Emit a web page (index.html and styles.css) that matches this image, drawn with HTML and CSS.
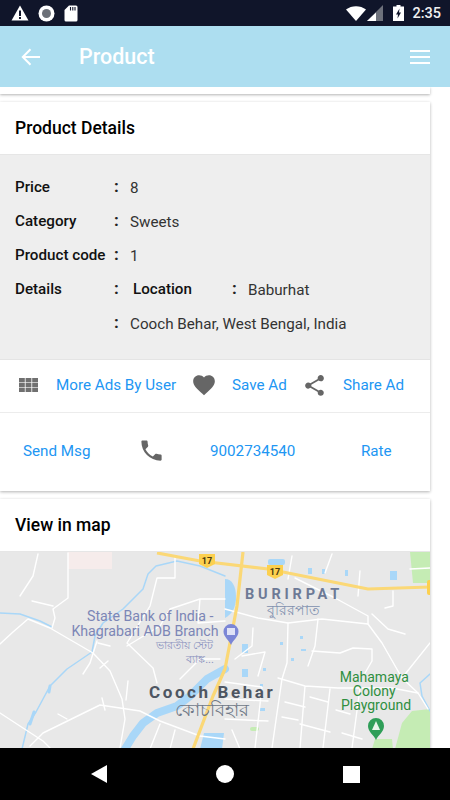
FILE: index.html
```html
<!DOCTYPE html>
<html lang="en">
<head>
    <meta charset="UTF-8">
    <meta name="viewport" content="width=device-width, initial-scale=1.0">
    <title>Product</title>
    <link rel="stylesheet" href="styles.css">
</head>
<body>
<div class="phone">

    <!-- Android status bar -->
    <div class="status-bar">
        <div class="status-left">
            <svg width="18" height="16" viewBox="0 0 18 16"><path d="M9 0.5L17.5 15.5H0.5z" fill="#fff"/><rect x="8" y="5.5" width="2" height="5.5" fill="#10152a"/><rect x="8" y="12" width="2" height="2" fill="#10152a"/></svg>
            <svg width="17" height="17" viewBox="0 0 17 17"><circle cx="8.5" cy="8.5" r="8" fill="#fff"/><circle cx="8.5" cy="8.5" r="4.5" fill="#6c7078"/></svg>
            <svg width="14" height="17" viewBox="0 0 14 17"><path d="M5 0.5H12a1.5 1.5 0 0 1 1.5 1.5V15a1.5 1.5 0 0 1-1.5 1.5H2A1.5 1.5 0 0 1 0.5 15V5z" fill="#fff"/><path d="M6.5 2v3.5M8.8 2v3.5M11 2v3.5" stroke="#10152a" stroke-width="1.1"/></svg>
        </div>
        <div class="status-right">
            <svg width="20" height="15" viewBox="0 0 20 15"><path d="M0 3.5C5.5-1 14.5-1 20 3.5L10 15z" fill="#fff"/></svg>
            <svg class="signal" width="16" height="16" viewBox="0 0 16 16"><path d="M16 0V16H0z" fill="#6d717b"/><path d="M9 7.5V16H0z" fill="#fff"/></svg>
            <svg class="battery" width="11" height="16" viewBox="0 0 11 16"><path d="M3.5 0H7.5V1.5H11V16H0V1.5H3.5z" fill="#fff"/><path d="M6.5 3.5L3 9.5H5L4.5 13.5L8 7.5H6z" fill="#10152a"/></svg>
            <span class="clock">2:35</span>
        </div>
    </div>

    <!-- App bar -->
    <header class="app-bar">
        <svg class="back-icon" width="20" height="18" viewBox="0 0 20 18"><path d="M19 9H2M9.5 1.2L1.8 9l7.7 7.8" fill="none" stroke="#fff" stroke-width="2"/></svg>
        <span class="app-title">Product</span>
        <div class="menu-icon"><span></span><span></span><span></span></div>
    </header>

    <main class="content">
        <div class="card card-stub"></div>

        <!-- Product details -->
        <section class="card">
            <h2 class="card-title">Product Details</h2>
            <div class="details">
                <span class="label">Price</span><span class="colon">:</span><span class="value">8</span>
                <span class="label">Category</span><span class="colon">:</span><span class="value">Sweets</span>
                <span class="label">Product code</span><span class="colon">:</span><span class="value">1</span>
                <span class="label">Details</span><span class="colon">:</span>
                <div class="sub-row">
                    <span class="label sub-label">Location</span><span class="colon">:</span><span class="value">Baburhat</span>
                </div>
                <span></span><span class="colon">:</span><span class="value">Cooch Behar, West Bengal, India</span>
            </div>
            <div class="actions actions-top">
                <svg class="icon-grid" width="19" height="14" viewBox="0 0 19 14" fill="#707070"><rect width="5.8" height="4.3"/><rect x="6.6" width="5.8" height="4.3"/><rect x="13.2" width="5.8" height="4.3"/><rect y="4.85" width="5.8" height="4.3"/><rect x="6.6" y="4.85" width="5.8" height="4.3"/><rect x="13.2" y="4.85" width="5.8" height="4.3"/><rect y="9.7" width="5.8" height="4.3"/><rect x="6.6" y="9.7" width="5.8" height="4.3"/><rect x="13.2" y="9.7" width="5.8" height="4.3"/></svg>
                <a class="link">More Ads By User</a>
                <svg width="26" height="26" viewBox="0 0 24 24" fill="#666"><path d="M12 21.35l-1.45-1.32C5.4 15.36 2 12.28 2 8.5 2 5.42 4.42 3 7.5 3c1.74 0 3.41.81 4.5 2.09C13.09 3.81 14.76 3 16.5 3 19.58 3 22 5.42 22 8.5c0 3.78-3.4 6.86-8.55 11.54L12 21.35z"/></svg>
                <a class="link">Save Ad</a>
                <svg width="25" height="25" viewBox="0 0 24 24" fill="#666"><path d="M18 16.08c-.76 0-1.44.3-1.96.77L8.91 12.7c.05-.23.09-.46.09-.7s-.04-.47-.09-.7l7.05-4.11c.54.5 1.25.81 2.04.81 1.66 0 3-1.34 3-3s-1.34-3-3-3-3 1.34-3 3c0 .24.04.47.09.7L8.04 9.81C7.5 9.31 6.79 9 6 9c-1.66 0-3 1.34-3 3s1.34 3 3 3c.79 0 1.5-.31 2.04-.81l7.12 4.16c-.05.21-.08.43-.08.65 0 1.61 1.31 2.92 2.92 2.92 1.61 0 2.92-1.31 2.92-2.92s-1.31-2.92-2.92-2.92z"/></svg>
                <a class="link">Share Ad</a>
            </div>
            <div class="actions actions-bottom">
                <a class="link">Send Msg</a>
                <svg width="27" height="27" viewBox="0 0 24 24" fill="#666"><path d="M6.62 10.79c1.44 2.83 3.76 5.14 6.59 6.59l2.2-2.2c.27-.27.67-.36 1.02-.24 1.12.37 2.33.57 3.57.57.55 0 1 .45 1 1V20c0 .55-.45 1-1 1-9.39 0-17-7.61-17-17 0-.55.45-1 1-1h3.5c.55 0 1 .45 1 1 0 1.25.2 2.45.57 3.57.11.35.03.74-.25 1.02l-2.2 2.2z"/></svg>
                <a class="link">9002734540</a>
                <a class="link">Rate</a>
            </div>
        </section>

        <!-- Map -->
        <section class="card">
            <h2 class="card-title">View in map</h2>
            <svg class="map" width="430" height="197" viewBox="0 0 430 197">
                <rect width="430" height="197" fill="#e8e8e8"/>
                <rect x="68" y="0" width="44" height="17" fill="#f6eceb"/>
                <path d="M410 0H430V31H413z" fill="#c5ecb4"/>
                <path d="M395 197L402 171 412 159 430 157V197z" fill="#c5ecb4"/>
                <path d="M372 197L375 187H392L393 197z" fill="#c5ecb4"/>
                <rect x="250" y="175" width="9" height="4" rx="2" fill="#c5ecb4"/>

                <!-- water -->
                <g fill="none" stroke="#a9d7f8" stroke-linejoin="round" stroke-linecap="round">
                    <path stroke-width="1.5" d="M225 24L200 14 177 9 156 14 148 22 143 37 123 57 103 71 95 84 92 100 67 117 50 134 36 160 28 172 22 197"/>
                    <path stroke-width="1.5" d="M0 61L20 62 40 69 52 75"/>
                    <path stroke-width="1.5" d="M430 122L420 131 422 144 430 159"/>
                    <path stroke-width="8" d="M225 117L207 127 190 144 177 154 157 161 143 171 133 184 125 197"/>
                    <path stroke-width="3" d="M50 134L49 140M34 160L30 172"/>
                </g>
                <g fill="#a9d7f8">
                    <path d="M225 27C232 27 236 34 236 45 236 56 232 62 225 66z"/>
                    <path d="M204 181H224L222 197H200z"/>
                    <rect x="268" y="7" width="17" height="6" rx="2"/>
                    <rect x="308" y="16" width="4" height="6"/><rect x="322" y="17" width="3" height="5"/><rect x="345" y="18" width="3" height="6"/>
                    <rect x="390" y="19" width="7" height="9"/>
                    <rect x="242" y="92" width="6" height="9"/><rect x="242" y="117" width="6" height="8"/>
                    <rect x="300" y="84" width="3" height="3"/><rect x="280" y="90" width="3" height="3"/>
                    <rect x="301" y="97" width="5" height="2"/><rect x="291" y="106" width="3" height="3"/>
                    <rect x="263" y="116" width="3" height="3"/><rect x="260" y="132" width="3" height="3"/><rect x="260" y="156" width="5" height="3"/>
                </g>

                <!-- roads -->
                <g fill="none" stroke="#fff" stroke-width="1.4" stroke-linejoin="round" stroke-linecap="round">
                    <path d="M0 92L13 80 28 67 50 76 93 101 110 119 122 147 125 167 120 196"/>
                    <path d="M68 1V46L53 57 55 66 52 76M32 49L53 54"/>
                    <path d="M38 2L33 24 20 44M97 89L90 111 83 122M98 91L110 94M100 116L108 109"/>
                    <path d="M30 194L43 181 100 153 140 159 160 169 200 184 225 187"/>
                    <path d="M0 161L23 176 43 189 50 196M58 162L67 167M128 129L126 148M102 146L105 158"/>
                    <path d="M175 4V26H157L150 54 127 91 153 116 157 131"/>
                    <path d="M127 94L160 74 170 57 200 47H225M200 47L198 71 225 69M180 127L200 107H220"/>
                    <path d="M225 57L258 66 288 71 322 67 368 72 382 91 402 126 418 141 428 157"/>
                    <path d="M295 26L335 46 368 64V72M372 62L388 77 405 82M402 126L430 91"/>
                    <path d="M288 71L287 111 282 127 277 161 272 196M318 67L315 94 308 114"/>
                    <path d="M312 99L340 101 353 96 372 97V109L365 121"/>
                    <path d="M278 126L305 134 338 136H392L418 141M305 134L300 196M330 137L323 196M360 136L352 196"/>
                    <path d="M225 147L268 149M225 167L268 169M225 130L262 135 255 196M253 76L252 94 235 107M242 104L265 100 258 124"/>
                    <path d="M292 4L288 27M332 2L325 21M360 19L358 44M410 17L430 16M393 39V54L385 56M342 181L362 187M300 172L330 180"/>
                    <path d="M160 172L150 197M175 178L170 197M232 178L240 197M285 150L305 155M310 145L328 150M282 165L298 168M336 158L350 162"/>
                </g>
                <g fill="none" stroke="#fbd876" stroke-linejoin="round">
                    <path stroke-width="3.2" d="M157 1L200 9 268 17 368 37 430 35"/>
                    <path stroke-width="3.2" d="M243 0L237 54 225 117 213 144 193 197"/>
                </g>

                <!-- shields -->
                <g class="shield">
                    <path d="M199 2H215V12L207 16 199 12z" fill="#fcd04f"/>
                    <text x="207" y="12">17</text>
                    <path d="M267 13H283V23L275 27 267 23z" fill="#fcd04f"/>
                    <text x="275" y="23">17</text>
                    <rect x="427" y="28" width="8" height="15" rx="2" fill="#fcd04f"/>
                </g>

                <!-- pins -->
                <path d="M231 72a7.5 7.5 0 0 1 7.5 7.5C238.5 85 233 88 231 93 229 88 223.5 85 223.5 79.5A7.5 7.5 0 0 1 231 72z" fill="#7b86d6"/>
                <rect x="227" y="76" width="8" height="7" fill="#dfe2f6"/>
                <path d="M376 166a8 8 0 0 1 8 8C384 180 378 183 376 188 374 183 368 180 368 174A8 8 0 0 1 376 166z" fill="#2f9e58"/>
                <path d="M376 169L380 178H372z" fill="#e8f5ea"/>

                <!-- labels -->
                <text class="map-label poi">
                    <tspan x="152" y="69">State Bank of India -</tspan>
                    <tspan x="145" y="84">Khagrabari ADB Branch</tspan>
                </text>
                <text class="map-label poi-bn">
                    <tspan x="186" y="97">ভারতীয় স্টেট</tspan>
                    <tspan x="200" y="111">ব্যাঙ্ক...</tspan>
                </text>
                <text class="map-place" x="149" y="146">Cooch Behar</text>
                <text class="map-area" x="245" y="47">BURIRPAT</text>
                <text class="map-label place-bn" x="212" y="164">কোচবিহার</text>
                <text class="map-label area-bn" x="293" y="63">বুরিরপাত</text>
                <text class="map-label park">
                    <tspan x="376" y="130">Mahamaya</tspan>
                    <tspan x="376" y="144">Colony</tspan>
                    <tspan x="376" y="158">Playground</tspan>
                </text>
            </svg>
        </section>
    </main>

    <!-- Android nav bar -->
    <footer class="nav-bar">
        <svg width="16" height="18" viewBox="0 0 16 18"><path d="M16 0V18L0 9z" fill="#fff"/></svg>
        <span class="nav-home"></span>
        <span class="nav-square"></span>
    </footer>

</div>
</body>
</html>
```

FILE: styles.css
```css
* {
    box-sizing: border-box;
}

body {
    margin: 0;
    background-color: #fff;
    font-family: Roboto, "Noto Sans", sans-serif;
}

.phone {
    width: 450px;
    height: 800px;
    display: flex;
    flex-direction: column;
    overflow: hidden;
}

.status-bar {
    height: 26px;
    flex-shrink: 0;
    display: flex;
    align-items: center;
    justify-content: space-between;
    padding: 0 9px 0 11px;
    background-color: #10152a;
}

.status-left, .status-right {
    display: flex;
    align-items: center;
}

.status-left {
    gap: 9px;
}

.status-right {
    gap: 1px;
}

.status-right .battery {
    margin-left: 9px;
}

.clock {
    margin-left: 7px;
    color: #f0f0f0;
    font-size: 14.5px;
    font-weight: 500;
}

.app-bar {
    height: 61px;
    flex-shrink: 0;
    display: flex;
    align-items: center;
    padding: 0 20px 0 21px;
    background-color: #addef0;
    color: #fff;
}

.app-title {
    margin-left: 38px;
    font-size: 21.5px;
    font-weight: 500;
}

.menu-icon {
    margin-left: auto;
    width: 20px;
    display: flex;
    flex-direction: column;
    gap: 4px;
}

.menu-icon span {
    height: 2px;
    background-color: #fff;
}

.content {
    flex: 1;
    min-height: 0;
    overflow: hidden;
}

.card {
    width: 430px;
    margin-bottom: 8px;
    background-color: #fff;
    box-shadow: 0 1px 3px rgba(0, 0, 0, 0.3);
}

.card-stub {
    height: 7px;
}

.card-title {
    height: 53px;
    margin: 0;
    padding: 0 15px;
    display: flex;
    align-items: center;
    border-bottom: 1px solid #e6e6e6;
    font-size: 17.5px;
    font-weight: 500;
    color: #000;
}

.details {
    height: 205px;
    display: grid;
    grid-template-columns: 99px 16px 1fr;
    grid-auto-rows: 34px;
    align-items: center;
    align-content: start;
    padding: 16px 0 0 15px;
    background-color: #eee;
    border-bottom: 1px solid #e4e4e4;
    font-size: 15.2px;
}

.label {
    font-weight: 500;
    color: #111;
    margin-top: -2px;
}

.colon {
    font-size: 17px;
    font-weight: 700;
    color: #222;
    margin-top: -4px;
}

.value {
    color: #333;
}

.sub-row {
    display: grid;
    grid-template-columns: 99px 16px 1fr;
    align-items: center;
    padding-left: 3px;
}

.actions {
    display: grid;
    align-items: center;
}

.actions-top {
    height: 53px;
    grid-template-columns: 37px 135px 41px 70px 41px 1fr;
    padding-left: 19px;
    padding-bottom: 2px;
    border-bottom: 1px solid #ececec;
}

.actions-bottom {
    height: 78px;
    grid-template-columns: 115px 72px 151px 1fr;
    padding-left: 23px;
    padding-bottom: 3px;
}

.actions svg {
    display: block;
}

.link {
    font-size: 15.2px;
    color: #2196f3;
    white-space: nowrap;
}

.map {
    display: block;
}

.map text {
    font-family: Roboto, "Noto Sans", sans-serif;
}

.shield text {
    font-size: 9px;
    font-weight: 700;
    fill: #4a3c10;
    text-anchor: middle;
}

.map-label {
    text-anchor: middle;
    font-size: 14px;
}

.poi {
    fill: #7c86b6;
    font-size: 14.2px;
}

.poi-bn {
    fill: #8b93bf;
    font-size: 11px;
}

.place-bn {
    fill: #6f7887;
    font-size: 18px;
}

.area-bn {
    fill: #8090ae;
    font-size: 14px;
}

.park {
    fill: #2f8f3f;
}

.map-place {
    font-size: 17px;
    font-weight: 700;
    letter-spacing: 2.6px;
    fill: #4e5662;
}

.map-area {
    font-size: 14.5px;
    font-weight: 700;
    letter-spacing: 3.8px;
    fill: #6d7a96;
}

.nav-bar {
    height: 52px;
    flex-shrink: 0;
    display: grid;
    grid-template-columns: 126px 126px 126px;
    justify-content: center;
    justify-items: center;
    align-items: center;
    background-color: #000;
}

.nav-home {
    width: 18px;
    height: 18px;
    border-radius: 50%;
    background-color: #fff;
}

.nav-square {
    width: 17px;
    height: 17px;
    background-color: #fff;
}
```
